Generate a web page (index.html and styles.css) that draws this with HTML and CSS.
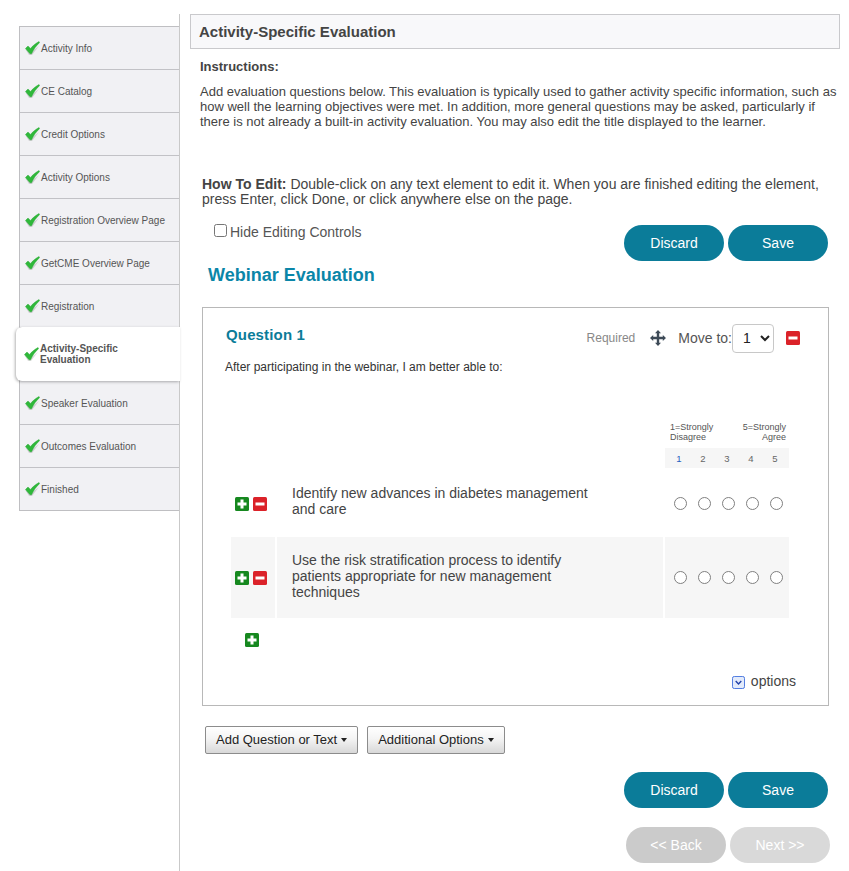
FILE: index.html
```html
<!DOCTYPE html>
<html lang="en">
<head>
<meta charset="utf-8">
<title>Activity-Specific Evaluation</title>
<link rel="stylesheet" href="styles.css">
</head>
<body>
<svg class="defs" width="0" height="0" aria-hidden="true">
  <defs>
    <symbol id="check" viewBox="0 0 15 15">
      <path d="M1 9 4 14 7 14 14 5 7 10.500 3.500 8Z" fill="#000" opacity=".14"/>
      <path d="M.4 7.600 3 5 5.500 7.400C7.500 5 10.500 2.500 14 .5L14.700 1.500C11 5 8.500 8.500 6.600 12.800H5Z" fill="#2fb83a" stroke="#23a22f" stroke-width=".4" stroke-linejoin="round"/>
    </symbol>
    <symbol id="plus" viewBox="0 0 14 14">
      <rect width="14" height="14" rx="1.500" fill="#16881f"/>
      <path d="M5.500 2.500h3v3h3v3h-3v3h-3v-3h-3v-3h3z" fill="#fff"/>
    </symbol>
    <symbol id="minus" viewBox="0 0 14 14">
      <rect width="14" height="14" rx="1.500" fill="#db2229"/>
      <rect x="2.500" y="5.500" width="9" height="3" fill="#fff"/>
    </symbol>
  </defs>
</svg>
<div class="page">
  <aside class="sidebar">
    <nav class="tabs">
      <a class="tab"><svg class="check"><use href="#check"/></svg><span>Activity Info</span></a>
      <a class="tab"><svg class="check"><use href="#check"/></svg><span>CE Catalog</span></a>
      <a class="tab"><svg class="check"><use href="#check"/></svg><span>Credit Options</span></a>
      <a class="tab"><svg class="check"><use href="#check"/></svg><span>Activity Options</span></a>
      <a class="tab"><svg class="check"><use href="#check"/></svg><span>Registration Overview Page</span></a>
      <a class="tab"><svg class="check"><use href="#check"/></svg><span>GetCME Overview Page</span></a>
      <a class="tab"><svg class="check"><use href="#check"/></svg><span>Registration</span></a>
      <a class="tab active"><svg class="check"><use href="#check"/></svg><span>Activity-Specific Evaluation</span></a>
      <a class="tab"><svg class="check"><use href="#check"/></svg><span>Speaker Evaluation</span></a>
      <a class="tab"><svg class="check"><use href="#check"/></svg><span>Outcomes Evaluation</span></a>
      <a class="tab"><svg class="check"><use href="#check"/></svg><span>Finished</span></a>
    </nav>
  </aside>
  <main class="main">
    <h1 class="page-title">Activity-Specific Evaluation</h1>
    <section class="instructions">
      <h2 class="instr-head">Instructions:</h2>
      <p class="instr-text">Add evaluation questions below. This evaluation is typically used to gather activity specific information, such as how well the learning objectives were met. In addition, more general questions may be asked, particularly if there is not already a built-in activity evaluation. You may also edit the title displayed to the learner.</p>
    </section>
    <p class="how-to"><b>How To Edit:</b> Double-click on any text element to edit it. When you are finished editing the element, press Enter, click Done, or click anywhere else on the page.</p>
    <div class="controls-row">
      <label class="hide-controls"><input type="checkbox" class="hide-check">Hide Editing Controls</label>
      <div class="pill-group">
        <button class="pill teal">Discard</button>
        <button class="pill teal">Save</button>
      </div>
    </div>
    <h2 class="eval-title">Webinar Evaluation</h2>
    <section class="question">
      <header class="q-head">
        <h3 class="q-title">Question 1</h3>
        <div class="q-tools">
          <span class="required">Required</span>
          <svg class="move" viewBox="0 0 16 16"><path d="M8 0 11 3.200H9.200V6.800H12.800V5L16 8 12.800 11V9.200H9.200V12.800H11L8 16 5 12.800H6.800V9.200H3.200V11L0 8 3.200 5V6.800H6.800V3.200H5Z" fill="#3d4a57"/></svg>
          <span class="move-label">Move to:</span>
          <select class="move-select"><option>1</option></select>
          <svg class="ico q-remove"><use href="#minus"/></svg>
        </div>
      </header>
      <p class="q-text">After participating in the webinar, I am better able to:</p>
      <div class="scale">
        <div class="scale-box">
          <div class="scale-labels"><span>1=Strongly<br>Disagree</span><span class="right">5=Strongly<br>Agree</span></div>
          <div class="scale-nums"><span class="first">1</span><span>2</span><span>3</span><span>4</span><span>5</span></div>
        </div>
      </div>
      <div class="row">
        <div class="cell-ctl"><svg class="ico"><use href="#plus"/></svg><svg class="ico"><use href="#minus"/></svg></div>
        <div class="cell-text"><span class="row-text">Identify new advances in diabetes management and care</span></div>
        <div class="cell-radio"><i></i><i></i><i></i><i></i><i></i></div>
      </div>
      <div class="row shaded">
        <div class="cell-ctl"><svg class="ico"><use href="#plus"/></svg><svg class="ico"><use href="#minus"/></svg></div>
        <div class="cell-text"><span class="row-text">Use the risk stratification process to identify patients appropriate for new management techniques</span></div>
        <div class="cell-radio"><i></i><i></i><i></i><i></i><i></i></div>
      </div>
      <div class="add-row"><svg class="ico"><use href="#plus"/></svg></div>
      <div class="options-row">
        <svg class="opt-ico" viewBox="0 0 14 14"><rect x=".5" y=".5" width="13" height="13" rx="2" fill="#e3ebfb" stroke="#3f6fdc"/><path d="M4 5.500 7 8.500 10 5.500" fill="none" stroke="#1f3fa8" stroke-width="1.500"/></svg>
        <span>options</span>
      </div>
    </section>
    <div class="add-buttons">
      <button class="drop">Add Question or Text<i class="caret"></i></button>
      <button class="drop">Additional Options<i class="caret"></i></button>
    </div>
    <div class="pill-group bottom">
      <button class="pill teal">Discard</button>
      <button class="pill teal">Save</button>
    </div>
    <div class="pill-group nav-btns">
      <button class="pill back">&lt;&lt; Back</button>
      <button class="pill next">Next &gt;&gt;</button>
    </div>
  </main>
</div>
</body>
</html>
```
FILE: styles.css
```css
* { box-sizing: border-box; }
html, body { margin: 0; padding: 0; height: 100%; overflow: hidden; background: #fff; }
body { font-family: "Liberation Sans", Arial, sans-serif; font-size: 14px; color: #444; }
.defs { position: absolute; }
.page { display: flex; height: 871px; padding-top: 14px; }

.sidebar { width: 180px; flex: none; padding: 12px 0 0 19px; border-right: 1px solid #c9c9c9; }
.tabs { display: flex; flex-direction: column; border: 1px solid #bfbfc2; border-right: 0; background: #f1f1f4; width: 160px; }
.tab { height: 43px; display: flex; align-items: center; padding-left: 5px; border-bottom: 1px solid #c2c2c6; font-size: 10px; color: #555; line-height: 11px; }
.tab:last-child { border-bottom: 0; height: 42px; }
.tab span { margin-left: 1px; }
.check { width: 15px; height: 15px; flex: none; }
.tab.active { height: 54px; margin: -1px 0 1px -4px; width: 164px; background: #fff; border: 0; border-radius: 6px 0 0 6px; box-shadow: -1px 1px 3px rgba(0,0,0,.3); font-weight: bold; padding-left: 8px; position: relative; }
.tab.active span { margin-left: 1px; width: 100px; }

.main { width: 650px; margin-left: 10px; flex: none; }
.page-title { margin: 0; height: 35px; border: 1px solid #c9c9cc; background: #f8f8fa; padding-left: 8px; font-size: 15px; line-height: 33px; color: #444; }
.instructions { padding: 0 0 0 10px; }
.instr-head { margin: 10px 0 0; font-size: 13px; line-height: 15px; color: #444; }
.instr-text { margin: 10px 0 0; width: 640px; font-size: 13px; line-height: 15px; }
.how-to { margin: 48px 0 0 12px; width: 630px; font-size: 14px; line-height: 15px; }

.controls-row { display: flex; justify-content: space-between; margin-top: 18px; padding: 0 12px 0 24px; height: 36px; }
.hide-controls { display: flex; align-items: flex-start; margin-top: -1px; font-size: 14px; line-height: 16px; color: #555; }
.hide-check { margin: 0 3px 0 0; width: 13px; height: 13px; }
.pill-group { display: flex; gap: 4px; }
.pill { width: 100px; height: 36px; border: 0; border-radius: 18px; font: 14px "Liberation Sans", Arial, sans-serif; color: #fff; padding: 0; }
.teal { background: #0b7c99; }
.back { background: #cbcbcb; }
.next { background: #d9d9d9; }

.eval-title { margin: 3px 0 0 18px; height: 28px; font-size: 18px; line-height: 22px; color: #0a86a8; }
.question { margin: 15px 0 0 12px; width: 627px; height: 399px; border: 1px solid #b8b8b8; padding: 0 0 0 22px; }
.q-head { display: flex; justify-content: space-between; align-items: flex-start; height: 30px; margin-top: 15px; padding-right: 28px; }
.q-title { margin: 3px 0 0 1px; font-size: 15px; line-height: 17px; letter-spacing: .15px; color: #0b7c99; }
.q-tools { display: flex; align-items: center; height: 30px; }
.required { font-size: 12px; color: #888; margin-right: 15px; }
.move { width: 16px; height: 16px; margin-right: 12px; }
.move-label { font-size: 14px; color: #555; }
.move-select { width: 42px; height: 29px; margin: 0 12px 0 0; font: 14px "Liberation Sans", Arial, sans-serif; background: #fff; border: 1px solid #c8c8c8; border-radius: 4px; padding-left: 6px; color: #222; }
.ico { width: 14px; height: 14px; flex: none; display: block; }
.q-text { margin: 7px 0 0; font-size: 12px; line-height: 14px; color: #333; }

.scale { display: flex; justify-content: flex-end; margin-top: 48px; padding-right: 39px; }
.scale-box { width: 124px; }
.scale-labels { display: flex; justify-content: space-between; padding: 0 3px 0 5px; font-size: 9px; line-height: 10px; color: #555; }
.scale-labels .right { text-align: right; }
.scale-nums { display: grid; grid-template-columns: repeat(5, 24px); justify-content: center; margin-top: 6px; height: 20px; align-items: center; background: #f6f6f6; text-align: center; font-size: 9.500px; color: #666; }
.scale-nums .first { color: #1f5fc0; }

.row { display: flex; gap: 2px; margin: 3px 0 0 6px; width: 558px; height: 65px; }
.cell-ctl { width: 44px; display: flex; align-items: center; gap: 4px; padding-left: 4px; flex: none; }
.cell-text { width: 386px; padding: 0 60px 6px 15px; display: flex; align-items: center; font-size: 14px; line-height: 16px; color: #444; flex: none; }
.cell-radio { width: 124px; padding-left: 2px; display: grid; grid-template-columns: repeat(5, 24px); justify-content: center; justify-items: center; align-items: center; flex: none; }
.cell-radio i { width: 13px; height: 13px; border: 1px solid #808080; border-radius: 50%; background: #fff; }
.row.shaded { height: 81px; margin-top: 1px; }
.shaded .cell-ctl, .shaded .cell-text, .shaded .cell-radio { background: #f6f6f6; }
.shaded .cell-text { padding-bottom: 4px; }

.add-row { height: 14px; margin: 15px 0 0 20px; }
.options-row { display: flex; align-items: center; justify-content: flex-end; gap: 6px; margin-top: 26px; padding-right: 32px; font-size: 14px; color: #444; line-height: 16px; }
.opt-ico { width: 13px; height: 13px; margin-top: 2px; }

.add-buttons { display: flex; gap: 9px; margin: 20px 0 0 15px; }
.drop { height: 28px; padding: 0 10px 2px; border: 1px solid #8c8c8c; border-radius: 2px; background: linear-gradient(#fff, #f4f4f4 45%, #d8d8d8); font: 13px "Liberation Sans", Arial, sans-serif; color: #222; }
.caret { display: inline-block; width: 0; height: 0; margin-left: 4px; vertical-align: middle; border: 3.500px solid transparent; border-top: 4px solid #222; border-bottom: 0; }
.bottom { justify-content: flex-end; margin: 18px 12px 0 0; }
.nav-btns { justify-content: flex-end; margin: 19px 10px 0 0; }
```
